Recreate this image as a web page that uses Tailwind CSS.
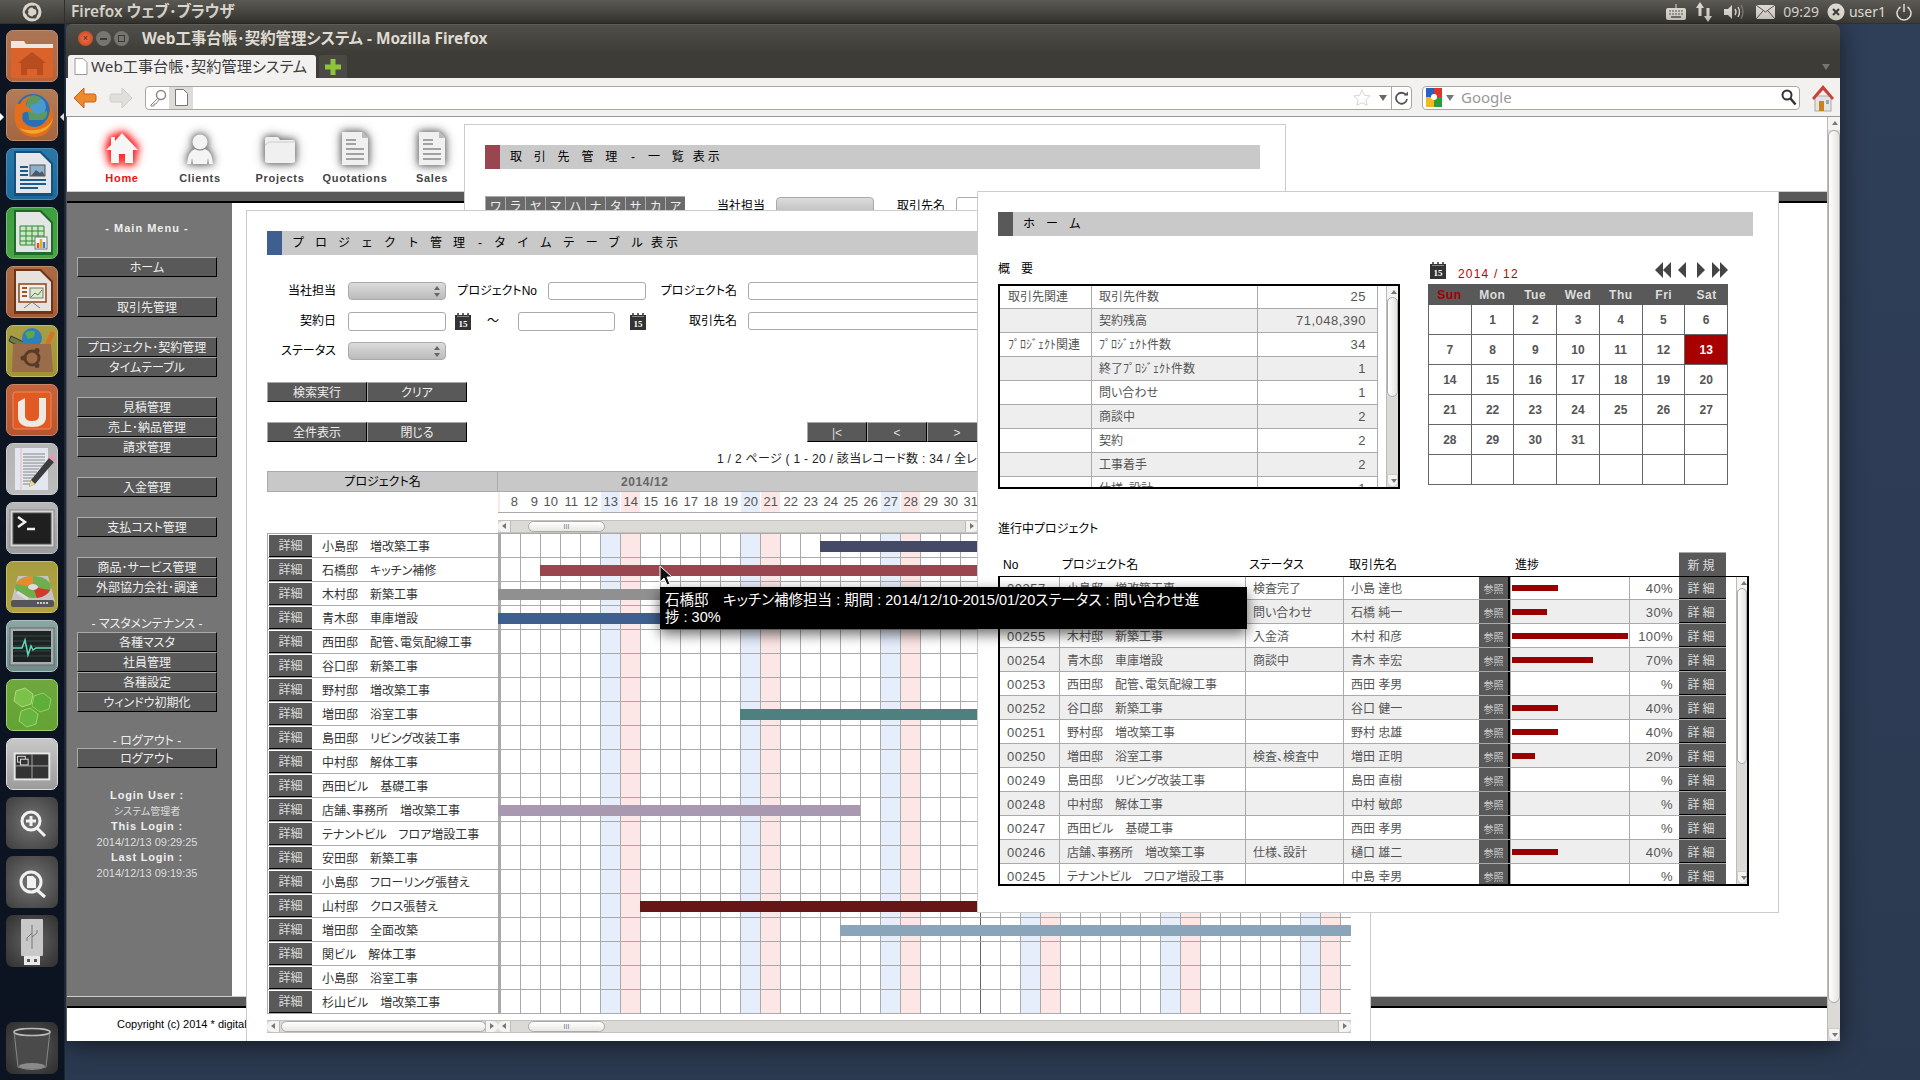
<!DOCTYPE html>
<html lang="ja">
<head>
  <meta charset="UTF-8" />
  <title>Web工事台帳･契約管理システム</title>
  <script src="https://cdn.jsdelivr.net/npm/@tailwindcss/browser@4"></script>
</head>
<body class="w-[1920px] h-[1080px] overflow-hidden bg-linear-to-b from-[#2f3f58] to-[#2b3950] font-['Liberation_Sans','Noto_Sans_CJK_JP',sans-serif] [font-feature-settings:'palt'] text-[12px] text-[#333]">

  <!-- ubuntu top panel -->
  <div class="h-[24px] flex items-center bg-linear-to-b from-[#5b5953] to-[#3d3b36] text-[#dfdbd2] border-b border-[#33312d]">
    <div class="w-[65px] h-full flex items-center justify-center border-r border-[#33312d]">
      <svg width="20" height="20" viewBox="0 0 20 20"><circle cx="10" cy="10" r="9.5" fill="#d8d4cb"/><circle cx="10" cy="10" r="5.4" fill="none" stroke="#4a4843" stroke-width="2"/><circle cx="4.6" cy="10" r="1.9" fill="#4a4843"/><circle cx="12.7" cy="5.3" r="1.9" fill="#4a4843"/><circle cx="12.7" cy="14.7" r="1.9" fill="#4a4843"/></svg>
    </div>
    <span class="ml-[6px] text-[15.400px] font-semibold font-['Noto_Sans','Noto_Sans_CJK_JP',sans-serif]">Firefox ウェブ･ブラウザ</span>
    <div class="ml-auto flex items-center h-full pr-[6px] text-[14px] font-['Noto_Sans',sans-serif]">
      <svg width="20" height="16" viewBox="0 0 20 16" class="mr-[9px]"><path d="M10 0v4" stroke="#dfdbd2"/><rect y="4" width="20" height="12" rx="2" fill="#dfdbd2"/><path d="M3 7h14M3 10h14" stroke="#555" stroke-dasharray="2 1"/><path d="M5 13h10" stroke="#555" stroke-width="1.5"/></svg>
      <svg width="18" height="20" viewBox="0 0 18 20" class="mr-[11px]"><path d="M5 0l4 6H6.500v8h-3V6H1z" fill="#dfdbd2"/><path d="M13 20l-4-6h2.500V6h3v8H17z" fill="#dfdbd2"/></svg>
      <svg width="20" height="16" viewBox="0 0 20 16" class="mr-[12px]"><path d="M0 5h4l4-4v14l-4-4H0z" fill="#dfdbd2"/><path d="M11 5q2 3 0 6M14 3q3 5 0 10" fill="none" stroke="#dfdbd2" stroke-width="1.400"/><path d="M17 1q4 7 0 14" fill="none" stroke="#88857e" stroke-width="1.200"/></svg>
      <svg width="19" height="14" viewBox="0 0 19 14" class="mr-[8px]"><rect width="19" height="14" fill="#dfdbd2"/><path d="M0 0l9.500 7L19 0M0 14l7-8M19 14l-7-8" fill="none" stroke="#55534e"/></svg>
      <span>09:29</span>
      <svg width="18" height="18" viewBox="0 0 18 18" class="ml-[8px] mr-[4px]"><circle cx="9" cy="9" r="8.500" fill="#dfdbd2"/><path d="M6 6l6 6M12 6l-6 6" stroke="#3d3b36" stroke-width="2"/></svg>
      <span>user1</span>
      <svg width="16" height="18" viewBox="0 0 16 18" class="ml-[10px] mr-[2px]"><path d="M4.500 4a7 7 0 1 0 7 0" fill="none" stroke="#dfdbd2" stroke-width="1.500"/><path d="M8 1v8" stroke="#dfdbd2" stroke-width="1.500"/></svg>
    </div>
  </div>

  <div class="flex h-[1056px]">
    <!-- launcher -->
    <div class="relative w-[65px] h-full flex flex-col items-center gap-[7px] pt-[6px] pb-[6px] bg-[#0b1420] border-r border-[#1c2533]">
      <div class="absolute left-0 top-[89px] w-0 h-0 border-y-[4px] border-y-transparent border-l-[4px] border-l-white"></div>
      <div class="absolute right-0 top-[89px] w-0 h-0 border-y-[4px] border-y-transparent border-r-[4px] border-r-[#ddd]"></div>

      <div class="w-[52px] h-[52px] shrink-0 rounded-[7px] border border-[#c08a6c] bg-linear-to-b from-[#a97656] to-[#b8623a]">
        <svg viewBox="0 0 50 50" class="w-full h-full"><path d="M4 10h13l2 3h27v32q0 2-2 2H6q-2 0-2-2z" fill="#d9632b"/><path d="M4 10h13l2 3h27v4H4z" fill="#efe7df"/><path d="M25 21l14 11h-3v12h-6v-6h-10v6h-6V32h-3z" fill="#b64c20"/></svg>
      </div>
      <div class="w-[52px] h-[52px] shrink-0 rounded-[7px] border border-[#c08c6c] bg-linear-to-b from-[#b27c58] to-[#a5653f]">
        <svg viewBox="0 0 50 50" class="w-full h-full"><circle cx="26" cy="21" r="17" fill="#2a6fb5"/><circle cx="29" cy="17" r="10" fill="#4a9ad0"/><path d="M20 7q8-4 14 1l-3 5-7 2-2 5q5 5 12 3l6-2q1 6-4 9H22z" fill="#5a9a62"/><path d="M9 15Q6 24 8 31q4 15 19 16 16 0 19-17 1-8-3-16 1 12-6 19-8 7-17 2-7-5-4-12 4-3 10 0-2-5-7-7 0-6 5-10-9 2-11 8-3-1-4 1z" fill="#e36f1c"/><path d="M12 38q13 11 28 1 5-5 6-11-3 8-12 11-12 3-22-1z" fill="#f2a928"/></svg>
      </div>
      <div class="w-[52px] h-[52px] shrink-0 rounded-[7px] border border-[#4a8db5] bg-linear-to-b from-[#2a77a8] to-[#1c6a9c]">
        <svg viewBox="0 0 50 50" class="w-full h-full"><path d="M7 2h27l12 12v33H7z" fill="#17507a"/><path d="M9 4h24l11 11v29H9z" fill="#e3e6ea"/><path d="M13 18h8M13 22h8M13 26h8M13 31h26M13 35h26M13 39h18" stroke="#1c5c88" stroke-width="2"/><rect x="23" y="16" width="15" height="11" fill="#8fb2cc" stroke="#555"/><path d="M24 27l5-6 4 3 2-2 3 5z" fill="#4a5a66"/></svg>
      </div>
      <div class="w-[52px] h-[52px] shrink-0 rounded-[7px] border border-[#78c076] bg-linear-to-b from-[#3f9e42] to-[#4aa346]">
        <svg viewBox="0 0 50 50" class="w-full h-full"><path d="M7 2h27l12 12v33H7z" fill="#1c6b26"/><path d="M9 4h24l11 11v29H9z" fill="#e3e6e2"/><path d="M13 18h24v19H13z" fill="#cfe6c2" stroke="#2b8a36"/><path d="M13 23h24M13 28h24M13 33h24M19 18v19M25 18v19M31 18v19" stroke="#2b8a36"/><rect x="28" y="29" width="12" height="12" fill="#f4f4f4" stroke="#777"/><path d="M31 40v-5" stroke-width="2.500" stroke="#d8542a"/><path d="M34 40v-9" stroke-width="2.500" stroke="#e8a82a"/><path d="M37 40v-6" stroke-width="2.500" stroke="#3d7fbf"/></svg>
      </div>
      <div class="w-[52px] h-[52px] shrink-0 rounded-[7px] border border-[#c08c6c] bg-linear-to-b from-[#ab6b44] to-[#a35c36]">
        <svg viewBox="0 0 50 50" class="w-full h-full"><path d="M7 2h27l12 12v33H7z" fill="#6e3518"/><path d="M9 4h24l11 11v29H9z" fill="#e6e2de"/><rect x="12" y="17" width="27" height="18" fill="#f4efea" stroke="#8a4418" stroke-width="1.500"/><path d="M15 21h5M15 25h5M15 29h5" stroke="#a3562c" stroke-width="2"/><rect x="23" y="21" width="13" height="10" fill="#dde8cf" stroke="#777"/><path d="M24 30l4-4 3 2 4-5" stroke="#3f8f45" fill="none"/><path d="M25 35l-8 6M25 35l8 6" stroke="#777"/></svg>
      </div>
      <div class="w-[52px] h-[52px] shrink-0 rounded-[7px] border border-[#c8bc66] bg-linear-to-b from-[#a89e45] to-[#a19437]">
        <svg viewBox="0 0 50 50" class="w-full h-full"><path d="M4 10l17 8-2 6L2 15z" fill="#6e7a4c" stroke="#333"/><circle cx="25" cy="12" r="10" fill="#2f7fbc"/><path d="M18 7q6-4 10-1l-1 5-6 2z" fill="#5ca84c"/><path d="M38 18l6-13 4 2-6 13z" fill="#d8702a"/><path d="M6 18h38l2 28H5z" fill="#9a6c4a"/><circle cx="25" cy="32" r="7" fill="none" stroke="#5a3c26" stroke-width="3"/><circle cx="16" cy="32" r="2.500" fill="#5a3c26"/><circle cx="30" cy="24.500" r="2.500" fill="#5a3c26"/><circle cx="30" cy="39.500" r="2.500" fill="#5a3c26"/></svg>
      </div>
      <div class="w-[52px] h-[52px] shrink-0 rounded-[7px] border border-[#c98568] bg-linear-to-b from-[#c4643c] to-[#b85530]">
        <svg viewBox="0 0 50 50" class="w-full h-full"><rect x="6" y="7" width="38" height="37" rx="2" fill="#e25a22" stroke="#ec8a5e"/><path d="M18 13v18q0 5 7 5t7-5V13h7v19q0 10-14 10T11 32V17z" fill="#efe9e2"/></svg>
      </div>
      <div class="w-[52px] h-[52px] shrink-0 rounded-[7px] border border-[#ccc] bg-linear-to-b from-[#b4b4b4] to-[#bcbcbc]">
        <svg viewBox="0 0 50 50" class="w-full h-full"><rect x="8" y="4" width="33" height="42" fill="#e4e7ef"/><path d="M14 4v42" stroke="#e8b8c0"/><path d="M16 10h22M16 13h22M16 16h22M16 19h22M16 22h20M16 25h16M16 28h14M16 31h12M16 34h10M16 37h8M16 40h8" stroke="#888"/><path d="M24 36l18-22 5 4-19 22-6 3z" fill="#3c3c3c"/><path d="M42 14l2-3q2-1 3 1l2 2-2 4z" fill="#e49ab8"/><path d="M22 43l2-7 4 4z" fill="#f0dc8a"/></svg>
      </div>
      <div class="w-[52px] h-[52px] shrink-0 rounded-[7px] border border-[#c4c4c4] bg-linear-to-b from-[#b8b8b8] to-[#9c9c9c]">
        <svg viewBox="0 0 50 50" class="w-full h-full"><rect x="3" y="7" width="44" height="37" fill="#d6d6d6" stroke="#888"/><rect x="6" y="10" width="38" height="31" fill="#1f1f1f" stroke="#555"/><path d="M11 14l7 5-7 5" stroke="#eee" stroke-width="2.500" fill="none"/><path d="M20 26h8" stroke="#eee" stroke-width="2.500"/></svg>
      </div>
      <div class="w-[52px] h-[52px] shrink-0 rounded-[7px] border border-[#c8be5e] bg-linear-to-b from-[#a89d3e] to-[#aea346]">
        <svg viewBox="0 0 50 50" class="w-full h-full"><path d="M11 14h30l7 26H4z" fill="#c4c4c4"/><rect x="4" y="38" width="43" height="7" rx="2" fill="#555"/><path d="M30 41h11" stroke="#ccc" stroke-dasharray="2 1" stroke-width="2"/><ellipse cx="26" cy="25" rx="18" ry="11" fill="#70ad4e"/><path d="M26 25V14A18 11 0 0 0 9 22z" fill="#e88a30"/><path d="M26 25l17 3a18 11 0 0 1-13 8z" fill="#d2382c"/><ellipse cx="26" cy="25" rx="5" ry="3" fill="#ddd"/><path d="M10 30l11 7" stroke="#ddd" stroke-width="3"/></svg>
      </div>
      <div class="w-[52px] h-[52px] shrink-0 rounded-[7px] border border-[#aec4c2] bg-linear-to-b from-[#8ba5a3] to-[#6f8c8a]">
        <svg viewBox="0 0 50 50" class="w-full h-full"><rect x="3" y="7" width="44" height="37" fill="#a8aeae" stroke="#666"/><rect x="6" y="10" width="38" height="31" fill="#1c2423"/><path d="M6 15h38M6 20h38M6 25h38M6 30h38M6 35h38" stroke="#3a4443"/><path d="M6 27h9l3-8 3 15 3-9 2 4 3-2h15" fill="none" stroke="#63d9b8" stroke-width="1.500"/></svg>
      </div>
      <div class="w-[52px] h-[52px] shrink-0 rounded-[7px] border border-[#9fd070] bg-linear-to-b from-[#6fa83e] to-[#64a234]">
        <svg viewBox="0 0 50 50" class="w-full h-full"><path d="M9 11l9-3 8 6-2 10-9 3-8-6z" fill="#7cc24a" stroke="#a8dc78"/><path d="M27 16l9-3 8 6-2 10-9 3-8-6z" fill="#5eae3a" stroke="#8fd066"/><path d="M14 31l9-3 8 6-2 10-9 3-8-6z" fill="#68b440" stroke="#98d870"/></svg>
      </div>
      <div class="w-[52px] h-[52px] shrink-0 rounded-[7px] border border-[#ddd] bg-linear-to-b from-[#c8c8c8] to-[#9c9c9c]">
        <svg viewBox="0 0 52 52" class="w-full h-full"><rect x="7" y="14" width="38" height="29" fill="#e8e8e8"/><rect x="9" y="16" width="34" height="25" fill="#333"/><path d="M26 16v25M9 28h34" stroke="#aaa"/><rect x="11" y="18" width="8" height="6" fill="none" stroke="#ddd"/><rect x="14" y="21" width="8" height="6" fill="#333" stroke="#ddd"/></svg>
      </div>
      <div class="w-[52px] h-[52px] shrink-0 rounded-[7px] bg-radial from-[#777] to-[#3d3d3d]">
        <svg viewBox="0 0 52 52" class="w-full h-full"><circle cx="25" cy="24" r="9" fill="none" stroke="#f2f2f2" stroke-width="3"/><path d="M31 31l8 8" stroke="#f2f2f2" stroke-width="3"/><path d="M20 24h10M25 19v10" stroke="#f2f2f2" stroke-width="3"/></svg>
      </div>
      <div class="w-[52px] h-[52px] shrink-0 rounded-[7px] bg-radial from-[#777] to-[#3d3d3d]">
        <svg viewBox="0 0 52 52" class="w-full h-full"><circle cx="25" cy="26" r="10" fill="none" stroke="#f2f2f2" stroke-width="3"/><path d="M31 34l8 7" stroke="#f2f2f2" stroke-width="3"/><path d="M21 20h6l3 3v9h-9z" fill="#f2f2f2"/></svg>
      </div>
      <div class="w-[52px] h-[52px] shrink-0 rounded-[7px] bg-radial from-[#666] to-[#2f2f2f]">
        <svg viewBox="0 0 52 52" class="w-full h-full"><rect x="15" y="4" width="22" height="37" rx="1" fill="#c8c8c8"/><rect x="18" y="41" width="16" height="9" fill="#e8e8e8"/><rect x="21" y="44" width="3" height="3" fill="#555"/><rect x="28" y="44" width="3" height="3" fill="#555"/><path d="M26 10v24M26 18l-5 5v3M26 22l5-4v-3" stroke="#777" fill="none"/></svg>
      </div>
      <div class="mt-auto w-[52px] h-[52px] shrink-0 rounded-[7px] bg-radial from-[#5c5c5c] to-[#2c2c2c]">
        <svg viewBox="0 0 52 52" class="w-full h-full"><path d="M8 9h36l-4 36q-14 5-28 0z" fill="#4a4a4a" stroke="#888"/><ellipse cx="26" cy="10" rx="18" ry="3.500" fill="#3a3a3a" stroke="#bbb" stroke-width="1.500"/><ellipse cx="26" cy="44" rx="13" ry="3" fill="#8a8a8a"/></svg>
      </div>
    </div>

    <!-- firefox window -->
    <div class="ml-px w-[1774px] h-[1017px] flex flex-col rounded-t-[6px] overflow-hidden shadow-[0_4px_24px_rgba(0,0,0,0.55)]">
      <div class="h-[28px] shrink-0 flex items-center bg-linear-to-b from-[#514f4a] to-[#3f3d38] border-t border-[#5e5c56]">
        <div class="ml-[12px] flex items-center gap-[3px]">
          <div class="w-[15px] h-[15px] rounded-full bg-radial from-[#f0704a] to-[#c0401c] flex items-center justify-center text-[9px] text-[#5a1a08] leading-none">×</div>
          <div class="w-[15px] h-[15px] rounded-full bg-[#77756f] flex items-center justify-center"><div class="w-[7px] h-[2px] bg-[#3d3b36]"></div></div>
          <div class="w-[15px] h-[15px] rounded-full bg-[#77756f] flex items-center justify-center"><div class="w-[7px] h-[7px] border border-[#3d3b36]"></div></div>
        </div>
        <span class="ml-[13px] text-[#dfdbd2] text-[15.400px] font-bold font-['Noto_Sans','Noto_Sans_CJK_JP',sans-serif]">Web工事台帳･契約管理システム - Mozilla Firefox</span>
      </div>
      <div class="h-[26px] shrink-0 flex items-end bg-[#3e3c37] pl-[2px] relative">
        <div class="w-[248px] h-[23px] flex items-center bg-[#f2f1f0] rounded-t-[3px] pl-[6px] text-[#3c3c3c] text-[15.200px]">
          <svg width="14" height="17" viewBox="0 0 14 17" class="mr-[3px] shrink-0"><path d="M1 .500h8l4 4v12H1z" fill="#fff" stroke="#999"/></svg>
          <span class="font-['Noto_Sans','Noto_Sans_CJK_JP',sans-serif] whitespace-nowrap">Web工事台帳･契約管理システム</span>
        </div>
        <div class="ml-[3px] w-[28px] h-[23px] flex items-center justify-center bg-[#4b4944] rounded-t-[3px]">
          <svg width="16" height="16" viewBox="0 0 16 16"><path d="M5.500 0h5v5.500H16v5h-5.500V16h-5v-5.500H0v-5h5.500z" fill="#8fc43a"/></svg>
        </div>
        <div class="absolute right-[10px] top-[12px] w-0 h-0 border-x-[4px] border-x-transparent border-t-[6px] border-t-[#77756f]"></div>
      </div>
      <div class="h-[39px] shrink-0 flex items-center bg-[#f2f1f0] border-b border-[#999] pt-[1px]">
        <svg width="24" height="22" viewBox="0 0 24 22" class="ml-[7px]"><path d="M11 1L1 11l10 10v-6h10q2 0 2-2V9q0-2-2-2H11z" fill="#ee8a2e" stroke="#c8601a"/></svg>
        <svg width="24" height="22" viewBox="0 0 24 22" class="ml-[12px]"><path d="M13 1l10 10-10 10v-6H3q-2 0-2-2V9q0-2 2-2h10z" fill="#e0dfdc" stroke="#cfcdca"/></svg>
        <div class="ml-[12px] w-[1267px] h-[24px] flex items-center bg-white border border-[#aaa59e] rounded-[4px]">
          <svg width="18" height="18" viewBox="0 0 18 18" class="ml-[3px]"><circle cx="12" cy="6" r="4.500" fill="none" stroke="#888" stroke-width="1.500"/><path d="M9 9l-7 7v1h3v-2h2l3-4" fill="none" stroke="#888"/></svg>
          <div class="ml-[2px] w-[24px] h-[22px] flex items-center justify-center bg-[#dedcd9]"><svg width="13" height="17" viewBox="0 0 13 17"><path d="M.5.500h8l4 4v12H.5z" fill="#fff" stroke="#777"/></svg></div>
          <svg width="18" height="18" viewBox="0 0 18 18" class="ml-auto"><path d="M9 1l2.400 5.300 5.800.6-4.300 3.900 1.200 5.700L9 13.600l-5.100 2.900 1.200-5.700L.8 6.900l5.800-.6z" fill="#fff" stroke="#d8d6d2"/></svg>
          <div class="ml-[8px] w-0 h-0 border-x-[4px] border-x-transparent border-t-[6px] border-t-[#666]"></div>
          <div class="ml-[4px] w-[20px] h-full flex items-center justify-center border-l border-[#aaa59e]"><svg width="14" height="14" viewBox="0 0 14 14"><path d="M11 4a5.500 5.500 0 1 0 1 4" fill="none" stroke="#555" stroke-width="1.800"/><path d="M9 4.500h4v-4z" fill="#555"/></svg></div>
        </div>
        <div class="ml-[10px] w-[378px] h-[24px] flex items-center bg-white border border-[#aaa59e] rounded-[4px]">
          <svg width="16" height="19" viewBox="0 0 16 19" class="ml-[3px]"><rect width="8" height="9" fill="#2a5fc4"/><rect x="8" width="8" height="9" fill="#d8362a"/><rect x="8" y="9" width="8" height="10" fill="#2e9a3c"/><rect y="9" width="8" height="10" fill="#f2b81c"/><circle cx="8" cy="9" r="3" fill="#fff"/></svg>
          <div class="ml-[4px] w-0 h-0 border-x-[4px] border-x-transparent border-t-[6px] border-t-[#777]"></div>
          <span class="ml-[7px] text-[#999] text-[15px] font-['Noto_Sans',sans-serif]">Google</span>
          <svg width="16" height="17" viewBox="0 0 16 17" class="ml-auto mr-[2px]"><circle cx="6" cy="6" r="4.500" fill="none" stroke="#333" stroke-width="2"/><path d="M9.500 9.500l5 6" stroke="#333" stroke-width="2.500"/></svg>
        </div>
        <svg width="24" height="28" viewBox="0 0 24 28" class="ml-[11px]"><rect x="4" y="12" width="16" height="15" fill="#e4e4e2" stroke="#aaa"/><rect x="8" y="17" width="5" height="10" fill="#c8841c"/><rect x="15" y="16" width="3" height="4" fill="#8fa8c8"/><path d="M12 1L1 14l2 2 9-10 9 10 2-2z" fill="#c8423a"/></svg>
      </div>

      <div class="flex flex-1 min-h-0 bg-[#555]">
        <!-- page -->
        <div class="relative ml-px w-[1760px] h-[924px] shrink-0 overflow-hidden bg-white">
          <div class="h-[74px] flex items-start pt-[15px] pl-[16px] text-[11px] font-bold tracking-[0.7px] text-[#444]">
            <div class="w-[78px] flex flex-col items-center text-[#ee1111]">
              <svg width="34" height="33" viewBox="0 0 34 33" class="[filter:drop-shadow(0_0_3px_#ff2020)_drop-shadow(0_0_5px_#ff4040)_drop-shadow(0_0_2px_#ff6060)]"><path d="M17 1L33 18h-5v13h-8v-9h-6v9H6V18H1l5-5V5h4v4z" fill="#f6f6f6"/></svg>
              <span class="mt-[5px]">Home</span>
            </div>
            <div class="w-[78px] flex flex-col items-center">
              <svg width="34" height="33" viewBox="0 0 34 33" class="[filter:drop-shadow(0_0_3px_#777)_drop-shadow(0_0_5px_#888)]"><circle cx="17" cy="10" r="7.500" fill="#f4f4f4"/><path d="M4 32q1-13 8-15 5 3 10 0 7 2 8 15h-4l-1-6-1 6H10l-1-6-1 6z" fill="#f4f4f4"/></svg>
              <span class="mt-[5px]">Clients</span>
            </div>
            <div class="w-[82px] flex flex-col items-center">
              <svg width="34" height="33" viewBox="0 0 34 33" class="[filter:drop-shadow(0_0_3px_#777)_drop-shadow(0_0_5px_#888)]"><path d="M2 7q0-2 2-2h10q2 0 3 3h13q2 0 2 2v19q0 2-2 2H4q-2 0-2-2z" fill="#f0f0f0"/><path d="M2 13l4-3h26" fill="none" stroke="#ccc"/></svg>
              <span class="mt-[5px]">Projects</span>
            </div>
            <div class="w-[68px] flex flex-col items-center">
              <svg width="34" height="33" viewBox="0 0 34 33" class="[filter:drop-shadow(0_0_3px_#777)_drop-shadow(0_0_5px_#888)]"><path d="M4 0h20l6 6v27H4z" fill="#f0f0f0"/><path d="M24 0v6h6" fill="#bbb"/><path d="M8 8h10M8 12h10M8 17h18M8 22h18M8 27h18" stroke="#888" stroke-width="1.500"/></svg>
              <span class="mt-[5px]">Quotations</span>
            </div>
            <div class="w-[86px] flex flex-col items-center">
              <svg width="34" height="33" viewBox="0 0 34 33" class="[filter:drop-shadow(0_0_3px_#777)_drop-shadow(0_0_5px_#888)]"><path d="M4 0h20l6 6v27H4z" fill="#f0f0f0"/><path d="M24 0v6h6" fill="#bbb"/><path d="M8 8h10M8 12h10M8 17h18M8 22h18M8 27h18" stroke="#888" stroke-width="1.500"/></svg>
              <span class="mt-[5px]">Sales</span>
            </div>
          </div>
          <div class="h-[12px] bg-[#595959] border-b-2 border-black border-t border-t-[#ccc]"></div>
          <div class="h-[793px] flex">
            <!-- side menu -->
            <div id="sidemenu" class="w-[165px] h-full bg-[#757575] text-[#eee]"></div>
          </div>
          <div class="h-[12px] bg-[#595959] border-b-2 border-black border-t border-t-[#ccc]"></div>
          <div class="h-[33px] pl-[50px] flex items-center text-[11px] text-black">Copyright (c) 2014 * digital</div>

          <!-- clients window, behind -->
          <div class="absolute left-[397px] top-[7px] w-[822px] h-[200px] z-10 bg-white border border-[#ccc] pl-[20px] pt-[20px]">
            <div class="w-[775px] h-[24px] flex items-center bg-[#c9c9c9] text-black [font-feature-settings:normal]">
              <div class="w-[15px] h-full bg-[#9a4650]"></div>
              <span class="ml-[10px] tracking-[11.800px] whitespace-nowrap">取引先管理<span class="inline-block w-[8px] mr-[11px] tracking-normal text-center">-</span>一覧<span class="-ml-[3px] tracking-[3px]">表示</span></span>
            </div>
            <div class="mt-[27px] flex items-center">
              <div id="kana" class="flex w-[200px]"></div>
              <span class="ml-[32px] w-[47px] text-black whitespace-nowrap">当社担当</span>
              <div class="ml-[12px] w-[98px] h-[19px] rounded-[4px] border border-[#aaa] bg-linear-to-b from-[#dcdcdc] to-[#bbb]"></div>
              <span class="ml-[23px] w-[48px] text-black whitespace-nowrap">取引先名</span>
              <div class="ml-[11px] w-[300px] h-[19px] rounded-[3px] border border-[#aaa] bg-white"></div>
            </div>
          </div>

          <!-- project timetable window -->
          <div class="absolute left-[179px] top-[93px] w-[1125px] h-[831px] z-20 bg-white border-l border-r border-t border-[#ccc] pl-[20px] pt-[20px]">
            <div class="w-[1040px] h-[24px] flex items-center bg-[#c9c9c9] text-black [font-feature-settings:normal]">
              <div class="w-[15px] h-full bg-[#3e5f8f]"></div>
              <span class="ml-[10px] tracking-[11px] whitespace-nowrap">プロジェクト管理<span class="inline-block w-[8px] mr-[10px] tracking-normal text-center">-</span>タイムテーブル<span class="-ml-[3px] tracking-[3px]">表示</span></span>
            </div>
            <div class="mt-[27px] flex flex-col gap-[12px] text-black">
              <div class="flex items-center h-[18px]">
                <span class="w-[69px] text-right">当社担当</span>
                <div class="ml-[12px] w-[98px] h-[18px] relative rounded-[4px] border border-[#aaa] bg-linear-to-b from-[#dcdcdc] to-[#bbb]">
                  <div class="absolute right-[5px] top-[3px] w-0 h-0 border-x-[3px] border-x-transparent border-b-[4px] border-b-[#666]"></div>
                  <div class="absolute right-[5px] bottom-[2px] w-0 h-0 border-x-[3px] border-x-transparent border-t-[4px] border-t-[#666]"></div>
                </div>
                <span class="w-[91px] text-right">プロジェクトNo</span>
                <div class="ml-[11px] w-[98px] h-[18px] rounded-[3px] border border-[#aaa] bg-white"></div>
                <span class="w-[91px] text-right">プロジェクト名</span>
                <div class="ml-[11px] w-[300px] h-[18px] rounded-[3px] border border-[#aaa] bg-white"></div>
              </div>
              <div class="flex items-center h-[18px]">
                <span class="w-[69px] text-right">契約日</span>
                <div class="ml-[12px] w-[98px] h-[19px] rounded-[3px] border border-[#aaa] bg-white"></div>
                <svg width="16" height="17" viewBox="0 0 16 17" class="ml-[9px]"><rect y="2" width="16" height="15" fill="#333"/><path d="M3 0v4M8 0v4M13 0v4" stroke="#333" stroke-width="1.500"/><path d="M2 3.500h12" stroke="#888"/><text x="8" y="13.500" font-size="9" font-family="Liberation Serif" font-weight="bold" text-anchor="middle" fill="#fff">15</text></svg>
                <span class="ml-[16px] w-[11px]">〜</span>
                <div class="ml-[20px] w-[97px] h-[19px] rounded-[3px] border border-[#aaa] bg-white"></div>
                <svg width="16" height="17" viewBox="0 0 16 17" class="ml-[15px]"><rect y="2" width="16" height="15" fill="#333"/><path d="M3 0v4M8 0v4M13 0v4" stroke="#333" stroke-width="1.500"/><path d="M2 3.500h12" stroke="#888"/><text x="8" y="13.500" font-size="9" font-family="Liberation Serif" font-weight="bold" text-anchor="middle" fill="#fff">15</text></svg>
                <span class="w-[91px] text-right">取引先名</span>
                <div class="ml-[11px] w-[300px] h-[18px] rounded-[3px] border border-[#aaa] bg-white"></div>
              </div>
              <div class="flex items-center h-[18px]">
                <span class="w-[69px] text-right">ステータス</span>
                <div class="ml-[12px] w-[98px] h-[18px] relative rounded-[4px] border border-[#aaa] bg-linear-to-b from-[#dcdcdc] to-[#bbb]">
                  <div class="absolute right-[5px] top-[3px] w-0 h-0 border-x-[3px] border-x-transparent border-b-[4px] border-b-[#666]"></div>
                  <div class="absolute right-[5px] bottom-[2px] w-0 h-0 border-x-[3px] border-x-transparent border-t-[4px] border-t-[#666]"></div>
                </div>
              </div>
            </div>
            <div id="btns1" class="mt-[22px] flex"></div>
            <div id="btns2" class="mt-[20px] flex"></div>
            <div class="mt-[9px] h-[16px] pl-[450px] whitespace-nowrap text-[#222] tracking-[0.3px] leading-[16px]">1 / 2 ページ ( 1 - 20 / 該当レコード数 : 34 / 全レコード数 : 34 )</div>

            <!-- gantt -->
            <div class="mt-[4px] flex h-[21px] w-[1084px]">
              <div class="w-[231px] flex items-center justify-center bg-[#c8c8c8] border border-[#aaa] text-black">プロジェクト名</div>
              <div class="w-[853px] flex items-center pl-[123px] bg-[#c8c8c8] border-y border-[#aaa] text-[12px] font-bold text-[#666] tracking-[0.6px]">2014/12</div>
            </div>
            <div class="flex h-[21px] w-[1084px]">
              <div class="w-[231px]"></div>
              <div id="dayrow" class="w-[853px] flex overflow-hidden border-b border-[#aaa]"></div>
            </div>
            <div class="flex h-[13px] mt-[7px] w-[1084px]">
              <div class="w-[231px]"></div>
              <div id="topscroll" class="w-[853px]"></div>
            </div>
            <div id="ganttrows" class="w-[1084px] border-t border-[#aaa]"></div>
            <div class="flex h-[13px] mt-[6px] w-[1084px]">
              <div id="leftscroll" class="w-[231px]"></div>
              <div id="botscroll" class="w-[853px]"></div>
            </div>
          </div>

          <!-- home window -->
          <div class="absolute left-[910px] top-[74px] w-[802px] h-[722px] z-30 bg-white border border-[#ccc] pl-[20px] pt-[20px]">
            <div class="w-[755px] h-[24px] flex items-center bg-[#c9c9c9] text-black [font-feature-settings:normal]">
              <div class="w-[15px] h-full bg-[#595959]"></div>
              <span class="ml-[10px] tracking-[11px]">ホーム</span>
            </div>
            <div class="mt-[24px] flex">
              <div class="w-[402px]">
                <div class="h-[24px] pt-px text-black tracking-[11px] leading-[16px]">概要</div>
                <div class="relative h-[205px] flex border-2 border-black overflow-hidden">
                  <div id="summary" class="w-[378px] shrink-0 -mt-px"></div>
                  <div id="summaryscroll" class="ml-[8px] w-[13px] h-full"></div>
                </div>
              </div>
              <div class="ml-[28px] w-[300px]">
                <div class="h-[24px] flex items-start pl-[2px]">
                  <svg width="16" height="17" viewBox="0 0 16 17" class="mt-[2px]"><rect y="2" width="16" height="15" fill="#333"/><path d="M3 0v4M8 0v4M13 0v4" stroke="#333" stroke-width="1.500"/><path d="M2 3.500h12" stroke="#888"/><text x="8" y="13.500" font-size="9" font-family="Liberation Serif" font-weight="bold" text-anchor="middle" fill="#fff">15</text></svg>
                  <span class="ml-[12px] mt-[7px] text-[#c00000] tracking-[1.200px] leading-[14px] whitespace-nowrap">2014 / 12</span>
                  <svg width="74" height="16" viewBox="0 0 74 16" class="ml-auto mr-[-1px] mt-[2px]"><path d="M8 0v16L0 8zM16 0v16L8 8zM31 0v16l-8-8zM42 0v16l8-8zM57 0v16l8-8zM65 0v16l8-8z" fill="#444"/></svg>
                </div>
                <div id="calendar" class="w-[300px]"></div>
              </div>
            </div>
            <div class="mt-[33px] h-[14px] text-black leading-[14px]">進行中プロジェクト</div>
            <div class="mt-[16px] relative h-[24px] w-[751px] text-black">
              <div class="flex items-center h-[24px] pt-px">
                <span class="ml-[5px] w-[59px]">No</span>
                <span class="w-[187px]">プロジェクト名</span>
                <span class="w-[100px]">ステータス</span>
                <span class="w-[166px]">取引先名</span>
                <span>進捗</span>
              </div>
              <div class="absolute left-[681px] top-0 w-[47px] h-[24px] flex items-center justify-center pt-[2px] bg-[#595959] border-t border-t-[#aaa] text-[#ddd] tracking-[3px]">新規</div>
            </div>
            <div class="relative w-[751px] h-[310px] flex border-2 border-t border-black overflow-hidden">
              <div id="projects" class="w-[726px] shrink-0 -mt-px"></div>
              <div id="projscroll" class="ml-[10px] w-[13px] h-full"></div>
            </div>
          </div>

          <!-- tooltip on the gantt bar -->
          <div class="absolute left-[593px] top-[470px] w-[587px] h-[42px] z-40 bg-black text-white text-[14.500px] leading-[17px] px-[5px] pt-[5px] whitespace-nowrap shadow-[0_5px_14px_rgba(0,0,0,0.6)]">石橋邸　キッチン補修担当 : 期間 : 2014/12/10-2015/01/20ステータス : 問い合わせ進<br>捗 : 30%</div>
          <svg width="14" height="22" viewBox="0 0 14 22" class="absolute left-[592px] top-[448px] z-50"><path d="M1 1v16l4-4 3 7 3-1-3-7h5z" fill="#111" stroke="#fff"/></svg>
        </div>

        <!-- browser scrollbar -->
        <div id="pagescroll" class="w-[13px] h-full"></div>
      </div>
    </div>
  </div>

  <script>
    // scrollbars
    const vbar = (pad, thumb, h) => `
      <div class="relative w-full bg-[#dcdad6] border-l border-[#bbb]" style="height:${h}px">
        <div class="absolute left-0 right-0 top-0 h-[13px] bg-[#f4f3f1]"></div>
        <div class="absolute left-[4px] top-[4px] w-0 h-0 border-x-[3px] border-x-transparent border-b-[4px] border-b-[#777]"></div>
        <div class="absolute left-0 right-0 rounded-full border border-[#aaa] bg-linear-to-r from-[#fff] to-[#e4e3e0]" style="top:${pad}px;height:${thumb}px"></div>
        <div class="absolute left-0 right-0 bottom-0 h-[13px] rounded-b-full border border-[#ccc] bg-[#f4f3f1]"></div>
        <div class="absolute left-[4px] bottom-[4px] w-0 h-0 border-x-[3px] border-x-transparent border-t-[4px] border-t-[#777]"></div>
      </div>`;
    const hbar = (thumbL, thumbW, w) => `
      <div class="relative h-[13px] bg-[#dcdad6] border-y border-[#c4c2be]" style="width:${w}px">
        <div class="absolute left-0 top-0 bottom-0 w-[13px] rounded-l-full bg-[#f4f3f1] border-r border-[#bbb]"></div>
        <div class="absolute left-[4px] top-[2px] w-0 h-0 border-y-[3px] border-y-transparent border-r-[4px] border-r-[#777]"></div>
        <div class="absolute top-0 bottom-0 rounded-full border border-[#aaa] bg-linear-to-b from-[#fff] to-[#e8e7e4] flex items-center justify-center text-[7px] leading-none text-[#777]" style="left:${thumbL}px;width:${thumbW}px">${thumbW < 100 ? 'III' : ''}</div>
        <div class="absolute right-0 top-0 bottom-0 w-[13px] rounded-r-full bg-[#f4f3f1] border-l border-[#bbb]"></div>
        <div class="absolute right-[4px] top-[2px] w-0 h-0 border-y-[3px] border-y-transparent border-l-[4px] border-l-[#777]"></div>
      </div>`;
    document.getElementById('pagescroll').innerHTML = vbar(13, 873, 924);
    document.getElementById('summaryscroll').innerHTML = vbar(11, 100, 201);
    document.getElementById('projscroll').innerHTML = vbar(11, 176, 307);
    document.getElementById('topscroll').innerHTML = hbar(30, 77, 480);
    document.getElementById('botscroll').innerHTML = hbar(30, 77, 853);
    document.getElementById('leftscroll').innerHTML = hbar(14, 205, 231);

    // side menu
    const dark = 'flex items-center justify-center pt-px bg-[#595959] border-t border-l border-[#aaa] border-b border-r border-b-black border-r-black';
    const menuBtn = t => `<div class="${dark} ml-[10px] w-[140px] h-[20px] text-[#eee]">${t}</div>`;
    const group = list => `<div class="flex flex-col">${list.map(menuBtn).join('')}</div>`;
    document.getElementById('sidemenu').innerHTML = `
      <div class="pl-[10px] w-[150px] mt-[18px] h-[14px] leading-[14px] text-center text-[11px] font-bold tracking-[1px]">- Main Menu -</div>
      <div class="mt-[22px] flex flex-col gap-[20px]">
        ${group(['ホーム'])}${group(['取引先管理'])}${group(['プロジェクト･契約管理', 'タイムテーブル'])}
        ${group(['見積管理', '売上･納品管理', '請求管理'])}${group(['入金管理'])}${group(['支払コスト管理'])}
        ${group(['商品･サービス管理', '外部協力会社･調達'])}
      </div>
      <div class="pl-[10px] w-[150px] mt-[20px] h-[15px] leading-[15px] text-center">- マスタメンテナンス -</div>
      ${group(['各種マスタ', '社員管理', '各種設定', 'ウィンドウ初期化'])}
      <div class="pl-[10px] w-[150px] mt-[22px] h-[14px] leading-[14px] text-center">- ログアウト -</div>
      ${group(['ログアウト'])}
      <div class="pl-[10px] w-[150px] mt-[20px] text-center text-[11px] leading-[15.6px] text-[#ddd]">
        <div class="font-bold tracking-[0.8px] text-[#eee]">Login User :</div>
        <div class="text-[10px]">システム管理者</div>
        <div class="font-bold tracking-[0.8px] text-[#eee]">This Login :</div>
        <div>2014/12/13 09:29:25</div>
        <div class="font-bold tracking-[0.8px] text-[#eee]">Last Login :</div>
        <div>2014/12/13 09:19:35</div>
      </div>`;

    // kana row of the clients window
    document.getElementById('kana').innerHTML = ['ワ', 'ラ', 'ヤ', 'マ', 'ハ', 'ナ', 'タ', 'サ', 'カ', 'ア']
      .map(k => `<div class="w-[20px] h-[20px] flex items-center justify-center bg-[#6a6a6a] border-l border-t border-[#aaa] text-[#eee]">${k}</div>`).join('');

    const wideBtn = t => `<div class="${dark} w-[100px] h-[20px] text-[#eee]">${t}</div>`;
    const pageBtn = t => `<div class="${dark} w-[60px] h-[20px] text-[#ddd]">${t}</div>`;
    document.getElementById('btns1').innerHTML = wideBtn('検索実行') + wideBtn('クリア');
    document.getElementById('btns2').innerHTML = wideBtn('全件表示') + wideBtn('閉じる') +
      '<div class="w-[340px]"></div>' + pageBtn('|&lt;') + pageBtn('&lt;') + pageBtn('&gt;') + pageBtn('&gt;|');

    // gantt, day 0 = Dec 8 2014 at x=500
    const days = [];
    for (let i = 0; i < 43; i++) days.push(new Date(2014, 11, 8 + i));
    const tint = d => d.getDay() === 6 ? 'bg-[#e6edfb]' : d.getDay() === 0 ? 'bg-[#fde6e6]' : 'bg-white';
    document.getElementById('dayrow').innerHTML = '<div class="w-[2px] shrink-0 bg-[#fde6e6]"></div>' + days.map(d =>
      `<div class="w-[20px] shrink-0 flex items-center justify-end pr-[2px] border-l border-white ${tint(d)} text-[13px] text-[#555]">${d.getDate()}</div>`).join('');

    const names = ['小島邸　増改築工事', '石橋邸　キッチン補修', '木村邸　新築工事', '青木邸　車庫増設', '西田邸　配管、電気配線工事',
      '谷口邸　新築工事', '野村邸　増改築工事', '増田邸　浴室工事', '島田邸　リビング改装工事', '中村邸　解体工事', '西田ビル　基礎工事',
      '店舗、事務所　増改築工事', 'テナントビル　フロア増設工事', '安田邸　新築工事', '小島邸　フローリング張替え', '山村邸　クロス張替え',
      '増田邸　全面改築', '関ビル　解体工事', '小島邸　浴室工事', '杉山ビル　増改築工事'];
    // left / width from the start of the track (x=498)
    const bars = {
      0: [322, 500, '#444a66'], 1: [42, 800, '#9a4650'], 2: [0, 500, '#909090'], 3: [0, 400, '#3e5f8f'],
      7: [242, 500, '#4f8080'], 11: [0, 362, '#a898b0'], 15: [142, 600, '#661616'], 16: [342, 511, '#8aa4ba']
    };
    const cells = days.map((d, i) =>
      `<div class="w-[20px] shrink-0 h-full border-l ${i === 24 ? 'border-[#666]' : 'border-[#aaa]'} ${tint(d)}"></div>`).join('');
    document.getElementById('ganttrows').innerHTML = names.map((name, r) => {
      const b = bars[r];
      const bar = b ? `<div class="absolute top-[7px] h-[11px]" style="left:${b[0]}px;width:${b[1]}px;background:${b[2]}"></div>` : '';
      return `<div class="flex h-[24px] border-b border-[#aaa]">
        <div class="w-[231px] shrink-0 flex items-center border-l border-[#aaa]">
          <div class="ml-px w-[43px] h-[22px] flex items-center justify-center pt-[2px] bg-[#595959] border-b border-black text-[#ddd]">詳細</div>
          <span class="ml-[10px] pt-[2px] text-[#333] whitespace-nowrap">${name}</span>
        </div>
        <div class="relative w-[853px] flex overflow-hidden"><div class="w-[2px] shrink-0 bg-[#aaa]"></div>${cells}${bar}</div>
      </div>`;
    }).join('');

    // summary table
    const summary = [['取引先関連', '取引先件数', '25'], ['', '契約残高', '71,048,390'], ['ﾌﾟﾛｼﾞｪｸﾄ関連', 'ﾌﾟﾛｼﾞｪｸﾄ件数', '34'],
      ['', '終了ﾌﾟﾛｼﾞｪｸﾄ件数', '1'], ['', '問い合わせ', '1'], ['', '商談中', '2'], ['', '契約', '2'], ['', '工事着手', '2'], ['', '仕様、設計', '1']];
    document.getElementById('summary').innerHTML = summary.map((s, i) =>
      `<div class="flex h-[24px] shrink-0 border-b border-[#aaa] border-r ${i % 2 ? 'bg-[#eee]' : 'bg-white'} text-[#555]">
        <div class="w-[92px] pl-[8px] flex items-center border-r border-[#aaa] whitespace-nowrap">${s[0]}</div>
        <div class="w-[166px] pl-[7px] flex items-center border-r border-[#aaa]">${s[1]}</div>
        <div class="w-[119px] pr-[11px] flex items-center justify-end text-[13px] tracking-[0.5px]">${s[2]}</div>
      </div>`).join('');

    // calendar, Dec 1 2014 is a Monday
    const dow = ['Sun', 'Mon', 'Tue', 'Wed', 'Thu', 'Fri', 'Sat'];
    let cal = '<div class="flex h-[21px] bg-[#595959]">' + dow.map((d, i) =>
      `<div class="w-[43px] flex items-center justify-center font-bold tracking-[0.5px] ${i ? 'text-[#ddd]' : 'text-[#a00000]'}">${d}</div>`).join('') + '</div>';
    cal += '<div class="grid grid-cols-7 border-l border-t-0 border-[#666]">';
    for (let i = 0; i < 42; i++) {
      const n = i >= 1 && i <= 31 ? i : '';
      cal += `<div class="h-[30px] flex items-center justify-center border-r border-b border-[#666] font-bold ${n === 13 ? 'bg-[#a80000] text-white' : 'bg-white text-[#555]'}">${n}</div>`;
    }
    document.getElementById('calendar').innerHTML = cal + '</div>';

    // running projects
    const rows = [['00257', '小島邸　増改築工事', '検査完了', '小島 達也', 40], ['00256', '石橋邸　キッチン補修', '問い合わせ', '石橋 純一', 30],
      ['00255', '木村邸　新築工事', '入金済', '木村 和彦', 100], ['00254', '青木邸　車庫増設', '商談中', '青木 幸宏', 70],
      ['00253', '西田邸　配管、電気配線工事', '', '西田 孝男', ''], ['00252', '谷口邸　新築工事', '', '谷口 健一', 40],
      ['00251', '野村邸　増改築工事', '', '野村 忠雄', 40], ['00250', '増田邸　浴室工事', '検査、検査中', '増田 正明', 20],
      ['00249', '島田邸　リビング改装工事', '', '島田 直樹', ''], ['00248', '中村邸　解体工事', '', '中村 敏郎', ''],
      ['00247', '西田ビル　基礎工事', '', '西田 孝男', ''], ['00246', '店舗、事務所　増改築工事', '仕様、設計', '樋口 雄二', 40],
      ['00245', 'テナントビル　フロア増設工事', '', '中島 幸男', '']];
    document.getElementById('projects').innerHTML = rows.map((p, i) =>
      `<div class="flex h-[24px] border-b border-[#aaa] ${i % 2 ? 'bg-[#eee]' : 'bg-white'} text-[#555]">
        <div class="w-[60px] pl-[7px] pt-[2px] flex items-center border-r border-[#aaa] text-[13px] tracking-[0.5px]">${p[0]}</div>
        <div class="w-[186px] pl-[7px] pt-[2px] flex items-center border-r border-[#aaa] whitespace-nowrap">${p[1]}</div>
        <div class="w-[98px] pl-[7px] pt-[2px] flex items-center border-r border-[#aaa]">${p[2]}</div>
        <div class="w-[135px] pl-[7px] pt-[2px] flex items-center">${p[3]}</div>
        <div class="w-[31px] flex items-center justify-center pt-[3px] bg-[#595959] border-r-2 border-black text-[10px] text-[#ccc]">参照</div>
        <div class="w-[120px] pl-px flex items-center border-x border-[#aaa]"><div class="h-[6px] bg-[#990000]" style="width:${p[4] * 1.16 || 0}px"></div></div>
        <div class="w-[49px] pr-[6px] pt-[2px] flex items-center justify-end bg-inherit text-[13px] tracking-[0.4px]">${p[4]}%</div>
        <div class="w-[47px] flex items-center justify-center pt-[3px] bg-[#595959] border-b border-black text-[#ddd] tracking-[3px]">詳細</div>
      </div>`).join('');
  </script>
</body>
</html>
